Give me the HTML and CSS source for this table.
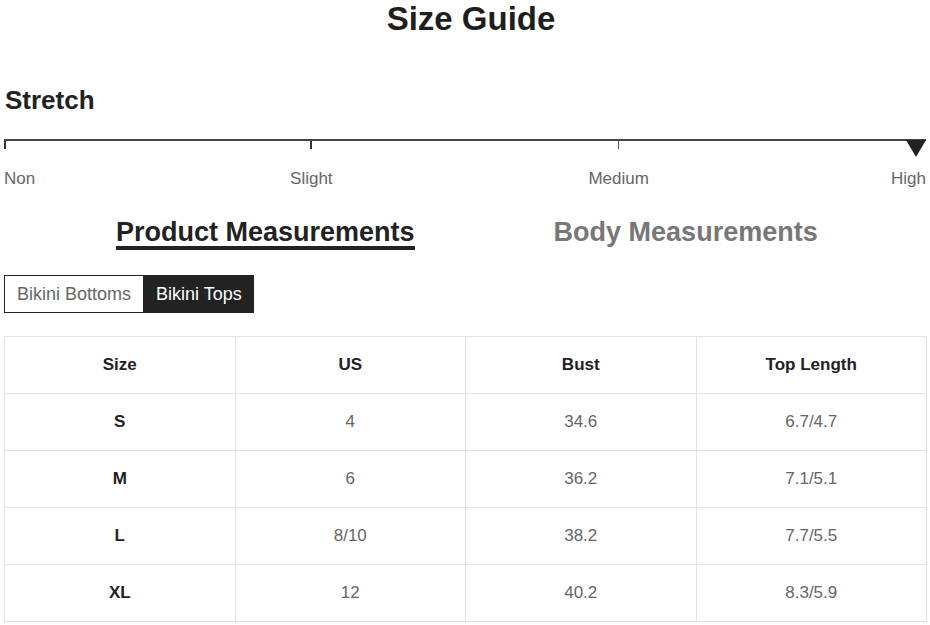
FILE: index.html
```html
<!DOCTYPE html>
<html>
<head>
<meta charset="utf-8">
<link rel="stylesheet" href="styles.css">
</head>
<body>
<div class="page">
  <h1 class="title">Size Guide</h1>

  <h2 class="stretch-title">Stretch</h2>
  <div class="scale">
    <div class="ticks">
      <span class="tick first"><i></i></span>
      <span class="tick"><i></i></span>
      <span class="tick thin"><i></i></span>
      <span class="tick last"><svg class="marker" width="20" height="17" viewBox="0 0 20 17"><polygon points="0,0 20,0 10,17" fill="#222"/></svg></span>
    </div>
    <div class="labels">
      <span class="lab first"><span>Non</span></span>
      <span class="lab"><span>Slight</span></span>
      <span class="lab"><span>Medium</span></span>
      <span class="lab last"><span>High</span></span>
    </div>
  </div>

  <div class="tabs">
    <div class="tab active">Product Measurements</div>
    <div class="tab">Body Measurements</div>
  </div>

  <div class="toggle">
    <div class="tog">Bikini Bottoms</div>
    <div class="tog on">Bikini Tops</div>
  </div>

  <table class="sizes">
    <thead>
      <tr><th>Size</th><th>US</th><th>Bust</th><th>Top Length</th></tr>
    </thead>
    <tbody>
      <tr><th>S</th><td>4</td><td>34.6</td><td>6.7/4.7</td></tr>
      <tr><th>M</th><td>6</td><td>36.2</td><td>7.1/5.1</td></tr>
      <tr><th>L</th><td>8/10</td><td>38.2</td><td>7.7/5.5</td></tr>
      <tr><th>XL</th><td>12</td><td>40.2</td><td>8.3/5.9</td></tr>
    </tbody>
  </table>
</div>
</body>
</html>
```

FILE: styles.css
```css
* { box-sizing: border-box; }
html, body { margin: 0; padding: 0; background: #fff; }
body {
  font-family: "Liberation Sans", Arial, sans-serif;
  color: #222;
}
.page {
  width: 930px;
  padding: 0 3px 0 4px;
}
.title {
  margin: 0;
  font-size: 33px;
  font-weight: bold;
  text-align: center;
  line-height: 37px;
  color: #1e1e1e;
  padding-left: 11px;
}
.stretch-title {
  margin: 47px 0 0 1px;
  font-size: 26px;
  line-height: 32px;
  font-weight: bold;
  color: #222;
}
.scale {
  margin-top: 23px;
  width: 922px;
}
.ticks {
  display: flex;
  justify-content: space-between;
  border-top: 2px solid #444;
  height: 14px;
}
.tick {
  width: 0;
  display: flex;
  justify-content: center;
}
.tick.first { justify-content: flex-start; }
.tick.last { justify-content: flex-end; }
.tick i {
  display: block;
  width: 2px;
  height: 8px;
  background: #333;
  flex: none;
}
.tick.thin i { width: 1px; background: #555; }
.marker { flex: none; display: block; margin-top: -1px; }
.labels {
  display: flex;
  justify-content: space-between;
  margin-top: 15px;
  font-size: 17px;
  line-height: 22px;
  color: #666;
}
.lab {
  width: 0;
  display: flex;
  justify-content: center;
  white-space: nowrap;
}
.lab span { flex: none; }
.lab.first { justify-content: flex-start; }
.lab.last { justify-content: flex-end; }
.tabs {
  display: flex;
  gap: 139px;
  padding-left: 112px;
  margin-top: 28px;
}
.tab {
  font-size: 27px;
  font-weight: bold;
  line-height: 28px;
  color: #777;
  padding-bottom: 0;
}
.tab.active {
  color: #222;
  border-bottom: 4px solid #222;
}
.toggle {
  display: flex;
  margin-top: 25px;
}
.tog {
  height: 38px;
  font-size: 18px;
  line-height: 36px;
  padding: 0 12px;
  border: 1px solid #222;
  color: #666;
  background: #fff;
}
.tog.on {
  background: #222;
  color: #fff;
  padding: 0 11px;
}
.sizes {
  margin-top: 23px;
  width: 923px;
  border-collapse: collapse;
  table-layout: fixed;
}
.sizes th, .sizes td {
  border: 1px solid #e3e3e3;
  height: 57px;
  text-align: center;
  font-size: 17px;
  padding: 0;
}
.sizes th {
  font-weight: bold;
  color: #222;
}
.sizes td {
  color: #666;
}
```
